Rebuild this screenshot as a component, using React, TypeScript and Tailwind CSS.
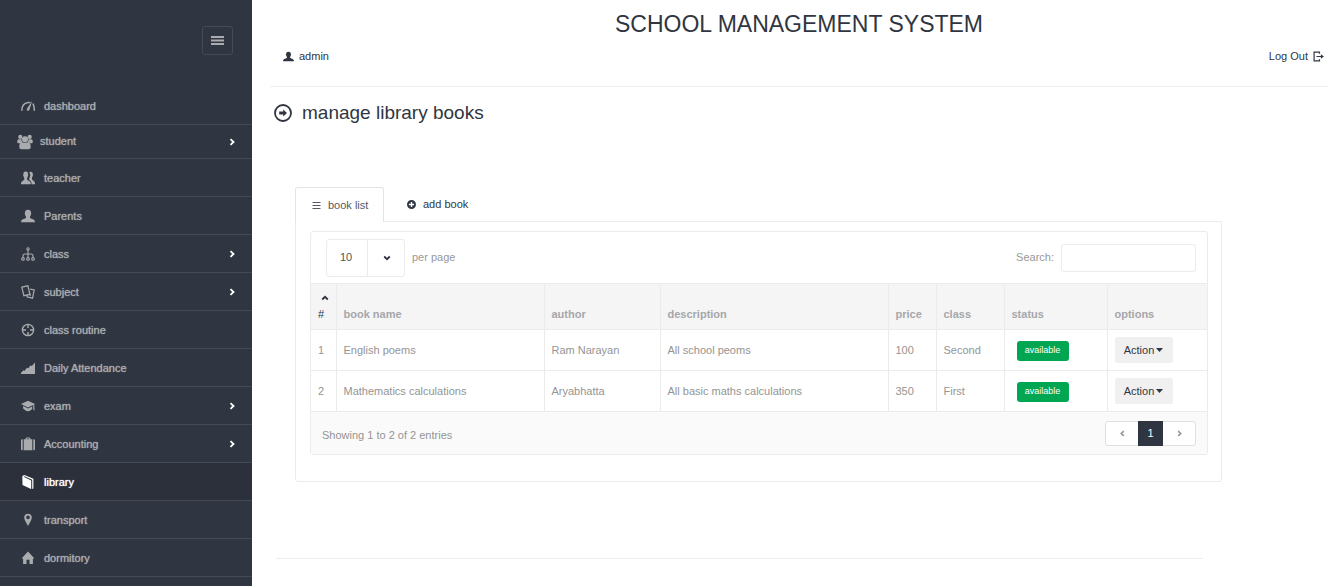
import React from "react";

type IconProps = { className?: string };

function Svg({ className = "size-3.5", box = "0 0 14 14", children }: IconProps & { box?: string; children: React.ReactNode }) {
  return (
    <svg viewBox={box} className={`shrink-0 ${className}`} fill="currentColor" aria-hidden="true">
      {children}
    </svg>
  );
}

const line = { fill: "none", stroke: "currentColor" };

const Gauge = () => (
  <Svg>
    <path {...line} strokeWidth="1.500" d="M.8 11.800c0-4.200 2.100-7.700 6.200-8.300 1-.2 1.700-.1 2.300.1M12 4.500c.9 1.900 1.300 4.200 1.300 7.300" />
    <path d="M11.200 1.800 8.400 11c-.5 1.400-3.100 1-2.600-1z" />
  </Svg>
);
const Group = () => (
  <Svg className="size-4" box="0 0 16 16">
    <circle cx="3.300" cy="2.900" r="2.100" />
    <circle cx="12.700" cy="2.900" r="2.100" />
    <circle cx="8" cy="5.300" r="3.100" />
    <path d="M.3 8.500V7C.3 5.600 1.500 5.100 4.400 5.500c.1 1.300.5 2.100 1.200 2.700-.8.200-1.500.4-2 1H1.200c-.6 0-.9-.2-.9-.7zM15.700 8.500V7c0-1.400-1.200-1.900-4.100-1.500-.1 1.300-.5 2.100-1.200 2.700.8.200 1.500.4 2 1h2.400c.6 0 .9-.2.9-.7zM5 8.300c2 1 4 1 6 0 1.900.1 2.700 1.900 2.700 4.700 0 1.300-.7 2.200-2 2.200H4.300c-1.300 0-2-.9-2-2.200C2.300 10.200 3.100 8.400 5 8.300z" />
  </Svg>
);
const Person = ({ className }: IconProps) => (
  <Svg className={className}>
    <path d="M7 .8c2.300 0 3.200 1.300 3 3.200.5.200.4 1.300-.2 1.700-.1 1-.5 1.500-.8 1.900v1.100c.3 1 4.800 1.300 4.900 3.600v.9H.1v-.9C.2 10 4.700 9.700 5 8.700V7.600c-.3-.4-.7-.9-.8-1.900-.6-.4-.7-1.500-.2-1.700C3.800 2.100 4.700.8 7 .8z" />
  </Svg>
);
const People = () => (
  <Svg>
    <path d="M4.700.6C6.500.6 7.200 1.900 7 3.600c.4.200.3 1.200-.2 1.600-.1 1-.4 1.400-.7 1.800v1.400c.3 1 3.500 1.500 3.700 3.900v.9H0v-.9c.1-2.300 3-2.900 3.300-3.900V7c-.3-.4-.6-.8-.7-1.800-.5-.4-.6-1.400-.2-1.600C2.300 1.900 2.900.6 4.700.6z" />
    <path d="M8.200 1.500c.5-.5 1-.7 1.600-.7 1.500 0 2.200 1.200 2 2.700.4.200.2 1.100-.2 1.400-.1.800-.3 1.200-.6 1.600v1.700c.3 1.100 2.800 1.700 3 3.800v1.200h-3.300c-.1-2.500-1.300-3.500-2.500-4.200.1-.5.100-1.300 0-1.800.5-.6.700-1.300.7-1.800.5-.7.500-1.600.1-2.100 0-.8-.2-1.300-.8-1.800z" />
  </Svg>
);
const Tree = () => (
  <Svg>
    <g {...line} strokeWidth="1.100">
      <circle cx="7" cy="1.900" r="1.200" />
      <circle cx="2" cy="11.900" r="1.300" />
      <circle cx="7" cy="11.900" r="1.300" />
      <circle cx="12" cy="11.900" r="1.300" />
      <path d="M7 3.200v7.300M2 10.500V9c0-1.500.8-2 2-2h6c1.200 0 2 .5 2 2v1.500" />
    </g>
  </Svg>
);
const Cards = () => (
  <Svg>
    <path {...line} strokeWidth="1.200" d="M.8 2.200 6.900.8l2 8.500-6 1.400zM9.200 4.200l4 .8-1.700 8.200-5.500-1.300.4-1.800" />
    <path {...line} strokeWidth="1.100" d="m8.300 7 1 4" />
  </Svg>
);
const Target = () => (
  <Svg>
    <circle {...line} strokeWidth="1.400" cx="7" cy="7" r="5.600" />
    <path {...line} strokeWidth="1.400" d="M7 1.400v3.600M7 9v3.600M1.400 7H5M9 7h3.600" />
  </Svg>
);
const AreaChart = () => (
  <Svg>
    <path d="M0 13v-1.200l2.500-2.500 1.200.5 2.200-3 1.500.5L9.300 4.500l1.500.4L14 1.500V13z" />
  </Svg>
);
const Cap = () => (
  <Svg>
    <path d="M7 1.700 0 5 7 8.400 12.200 6v1.100l.2 4.200h1.200L13.200 5.500 14 5zM2.100 7.100v2.300C3.800 10.900 5.200 12.200 7.100 12.200c1.700 0 3-1.100 4.100-2.500V7.500L7 9.600z" />
  </Svg>
);
const Suitcase = () => (
  <Svg>
    <path d="M0 3.500C0 2.600.5 2.300 1.700 2.300v10.900C.5 13.200 0 12.900 0 12zM14 3.500c0-.9-.5-1.200-1.700-1.200v10.900c1.200 0 1.700-.3 1.700-1.200zM2.700 2.300H4.500C4.500.9 5.200.5 7 .5s2.500.4 2.500 1.800h1.800v10.900H2.700zM5.700 2.300h2.600c0-.5-.3-.7-1.300-.7s-1.300.2-1.300.7z" />
  </Svg>
);
const Book = () => (
  <Svg>
    <path d="M1.300.9 3.400 0l9 3.800v9.600l-1.200.6V4.700L3.500 1.300l-.9.500 7.600 3.600v8.700L1.500 10z" />
  </Svg>
);
const Pin = () => (
  <Svg>
    <path fillRule="evenodd" d="M7 .8c2.300 0 3.800 1.500 3.800 3.600C10.800 6.800 8.800 9 7 13 5.200 9 3.200 6.800 3.200 4.400 3.200 2.300 4.700.8 7 .8zM7 2.600a1.800 1.800 0 1 0 0 3.600 1.800 1.800 0 0 0 0-3.600z" />
  </Svg>
);
const House = () => (
  <Svg>
    <path d="M7 .6 13.500 7.500H11.900v5.500H8.500V8.800h-3V13H2.100V7.500H.5z" />
  </Svg>
);
const Bars = ({ className }: IconProps) => (
  <Svg className={className} box="0 0 13 9">
    <path d="M0 0h13v2H0zM0 3.500h13v2H0zM0 7h13v2H0z" />
  </Svg>
);
const ThinBars = () => (
  <Svg className="h-[7px] w-[9px]" box="0 0 9 7">
    <path d="M.5 0h8v1h-8zM.5 3h8v1h-8zM.5 6h8v1h-8z" />
  </Svg>
);
const Plus = () => (
  <Svg className="size-[9px]" box="0 0 9 9">
    <path fillRule="evenodd" d="M4.500 0a4.500 4.500 0 1 1 0 9 4.500 4.500 0 0 1 0-9zM3.800 1.900v1.900H1.900v1.400h1.900v1.900h1.400V5.200h1.900V3.800H5.200V1.900z" />
  </Svg>
);
const CircleArrow = () => (
  <Svg className="size-[18px]" box="0 0 18 18">
    <circle {...line} strokeWidth="1.800" cx="9" cy="9" r="8" />
    <path d="M5.200 7.600h4V5.400L13 9l-3.800 3.600v-2.200h-4z" />
  </Svg>
);
const Exit = () => (
  <Svg className="size-[11px]" box="0 0 11 11">
    <path {...line} strokeWidth="1.200" d="M6.500 2.800V1.100H1.100v8.800h5.400V8.200M3.500 5.500h5" />
    <path d="M7.900 3.200 10.900 5.500 7.900 7.800z" />
  </Svg>
);
const Chevron = ({ dir, className = "size-2" }: IconProps & { dir: "left" | "right" | "up" | "down" }) => {
  const d = {
    left: "M5.500 1.200 2.500 4l3 2.800",
    right: "M2.500 1.200 5.500 4l-3 2.800",
    up: "M1.200 5.500 4 2.800l2.800 2.700",
    down: "M1.200 2.500 4 5.200l2.800-2.700",
  }[dir];
  return (
    <Svg className={className} box="0 0 8 8">
      <path {...line} strokeWidth="1.800" d={d} />
    </Svg>
  );
};

const menu = [
  { label: "dashboard", Icon: Gauge },
  { label: "student", Icon: Group, sub: true, compact: true },
  { label: "teacher", Icon: People },
  { label: "Parents", Icon: Person },
  { label: "class", Icon: Tree, sub: true },
  { label: "subject", Icon: Cards, sub: true },
  { label: "class routine", Icon: Target },
  { label: "Daily Attendance", Icon: AreaChart },
  { label: "exam", Icon: Cap, sub: true },
  { label: "Accounting", Icon: Suitcase, sub: true },
  { label: "library", Icon: Book, active: true },
  { label: "transport", Icon: Pin },
  { label: "dormitory", Icon: House },
];

const books = [
  { id: 1, name: "English poems", author: "Ram Narayan", description: "All school peoms", price: 100, grade: "Second" },
  { id: 2, name: "Mathematics calculations", author: "Aryabhatta", description: "All basic maths calculations", price: 350, grade: "First" },
];

function Sidebar() {
  return (
    <aside className="w-[252px] shrink-0 bg-[#303641] text-[#aaabae]">
      <div className="flex h-[87px] items-start justify-end pt-[26px] pr-[19px]">
        <button aria-label="Toggle menu" className="flex h-[29px] w-[31px] items-center justify-center rounded-[3px] border border-[#454a54]">
          <Bars className="h-[9px] w-[13px]" />
        </button>
      </div>
      <nav>
        <ul>
          {menu.map(({ label, Icon, sub, active, compact }) => (
            <li key={label} className="border-b border-[#454a54]">
              <a
                href="#"
                className={`flex items-center pr-4 ${compact ? "h-[33px] gap-[7px] pl-[17px]" : "h-[37px] gap-[9px] pl-[21px]"} ${active ? "bg-[#2b303a] text-white" : ""}`}
              >
                <Icon />
                <span className={`[text-shadow:0_0_1px_currentColor] ${compact ? "" : "pt-0.5"}`}>{label}</span>
                {sub && <Chevron dir="right" className="ml-auto size-2 text-white" />}
              </a>
            </li>
          ))}
        </ul>
      </nav>
    </aside>
  );
}

const cell = "border-l border-[#ebebeb] px-[7px] first:border-l-0";

function BookTable() {
  return (
    <table className="w-full table-fixed border-collapse text-left">
      <colgroup>
        <col className="w-[25px]" />
        <col className="w-[208px]" />
        <col className="w-[116px]" />
        <col />
        <col className="w-12" />
        <col className="w-[68px]" />
        <col className="w-[103px]" />
        <col className="w-[100px]" />
      </colgroup>
      <thead>
        <tr className="h-[46px] border-y border-[#ebebeb] bg-[#f5f5f6] align-bottom text-[#a6a7aa]">
          <th className={`${cell} pb-[7px] text-[#303641]`}>
            <Chevron dir="up" className="mb-1 ml-[3px] size-2" />
            <span className="block leading-4 font-normal">#</span>
          </th>
          {["book name", "author", "description", "price", "class", "status", "options"].map((h) => (
            <th key={h} className={`${cell} pb-[7px] leading-4 font-bold`}>{h}</th>
          ))}
        </tr>
      </thead>
      <tbody className="text-[#949494]">
        {books.map((b) => (
          <tr key={b.id} className="h-[41px] border-b border-[#ebebeb]">
            <td className={cell}>{b.id}</td>
            <td className={cell}>{b.name}</td>
            <td className={cell}>{b.author}</td>
            <td className={cell}>{b.description}</td>
            <td className={cell}>{b.price}</td>
            <td className={cell}>{b.grade}</td>
            <td className={`${cell} pt-0.5 pl-3`}>
              <span className="flex h-5 w-[52px] items-center justify-center rounded-[3px] bg-[#00a651] text-[9px] text-white">available</span>
            </td>
            <td className={cell}>
              <button className="flex h-[26px] w-[58px] items-center justify-center gap-0.5 rounded-[2px] bg-[#f0f0f1] text-[#303641]">
                Action
                <Svg className="h-1 w-[7px]" box="0 0 7 4">
                  <path d="M0 0h7L3.500 4z" />
                </Svg>
              </button>
            </td>
          </tr>
        ))}
      </tbody>
    </table>
  );
}

export default function App() {
  return (
    <div className="flex h-screen overflow-hidden bg-white font-['Liberation_Sans',Arial,sans-serif] text-[11px] text-[#303641]">
      <Sidebar />
      <main className="min-w-0 grow pl-[18px]">
        <header className="border-b border-[#eeeeee]">
          <h1 className="pt-2 text-center text-[23px] leading-8">SCHOOL MANAGEMENT SYSTEM</h1>
          <div className="flex h-[46px] items-start justify-between pt-2 pr-1 pl-[13px] leading-4">
            <a href="#" className="flex items-center gap-[5px]">
              <Person className="size-[11px]" />
              admin
            </a>
            <a href="#" className="flex items-center gap-[5px]">
              Log Out
              <Exit />
            </a>
          </div>
        </header>

        <h2 className="flex items-center gap-2.5 pt-3 pl-1 text-[19px] leading-7">
          <CircleArrow />
          manage library books
        </h2>

        <section className="mt-[60px] mr-[106px] ml-[25px]">
          <div role="tablist" className="flex">
            <button
              role="tab"
              aria-selected="true"
              className="relative -mb-px flex h-[35px] w-[89px] items-center gap-[7px] rounded-t-[3px] border border-b-0 border-[#e4e4e5] bg-white pl-4 text-[#555b66]"
            >
              <ThinBars />
              book list
            </button>
            <button role="tab" aria-selected="false" className="flex h-[34px] items-center gap-[7px] px-[23px] pt-px">
              <Plus />
              add book
            </button>
          </div>
          <div className="rounded-b-[3px] border border-[#ebebeb] pt-[9px] pr-[13px] pb-[26px] pl-[14px]">
            <div className="rounded-[3px] border border-[#ebebeb]">
              <div className="flex h-[51px] items-center justify-between pr-[11px] pl-[15px] text-[#999999]">
                <label className="flex items-center gap-[7px]">
                  <span className="relative flex">
                    <select className="h-[38px] w-[79px] appearance-none rounded-[3px] border border-[#ebebeb] bg-white pl-[13px] text-[#555555]">
                      <option>10</option>
                      <option>25</option>
                      <option>50</option>
                    </select>
                    <span className="pointer-events-none absolute inset-y-0 right-0 flex w-[38px] items-center justify-center border-l border-[#ebebeb] text-[#303641]">
                      <Chevron dir="down" />
                    </span>
                  </span>
                  per page
                </label>
                <label className="flex items-center gap-[7px]">
                  Search:
                  <input type="text" className="h-7 w-[135px] rounded-[3px] border border-[#ebebeb] bg-white px-2" />
                </label>
              </div>
              <BookTable />
              <div className="flex h-[42px] items-center justify-between bg-[#fafafa] pr-[11px] pl-[11px] text-[#949494]">
                <p className="pt-1">Showing 1 to 2 of 2 entries</p>
                <div className="flex h-[25px] w-[91px] rounded-[3px] border border-[#e0e0e1] bg-white">
                  <button aria-label="Previous" className="flex grow items-center justify-center">
                    <Chevron dir="left" className="size-[7px]" />
                  </button>
                  <button className="-my-px w-[25px] bg-[#303641] text-white">1</button>
                  <button aria-label="Next" className="flex grow items-center justify-center">
                    <Chevron dir="right" className="size-[7px]" />
                  </button>
                </div>
              </div>
            </div>
          </div>
        </section>

        <hr className="mt-[76px] mr-[125px] ml-1.5 border-[#eeeeee]" />
      </main>
    </div>
  );
}
